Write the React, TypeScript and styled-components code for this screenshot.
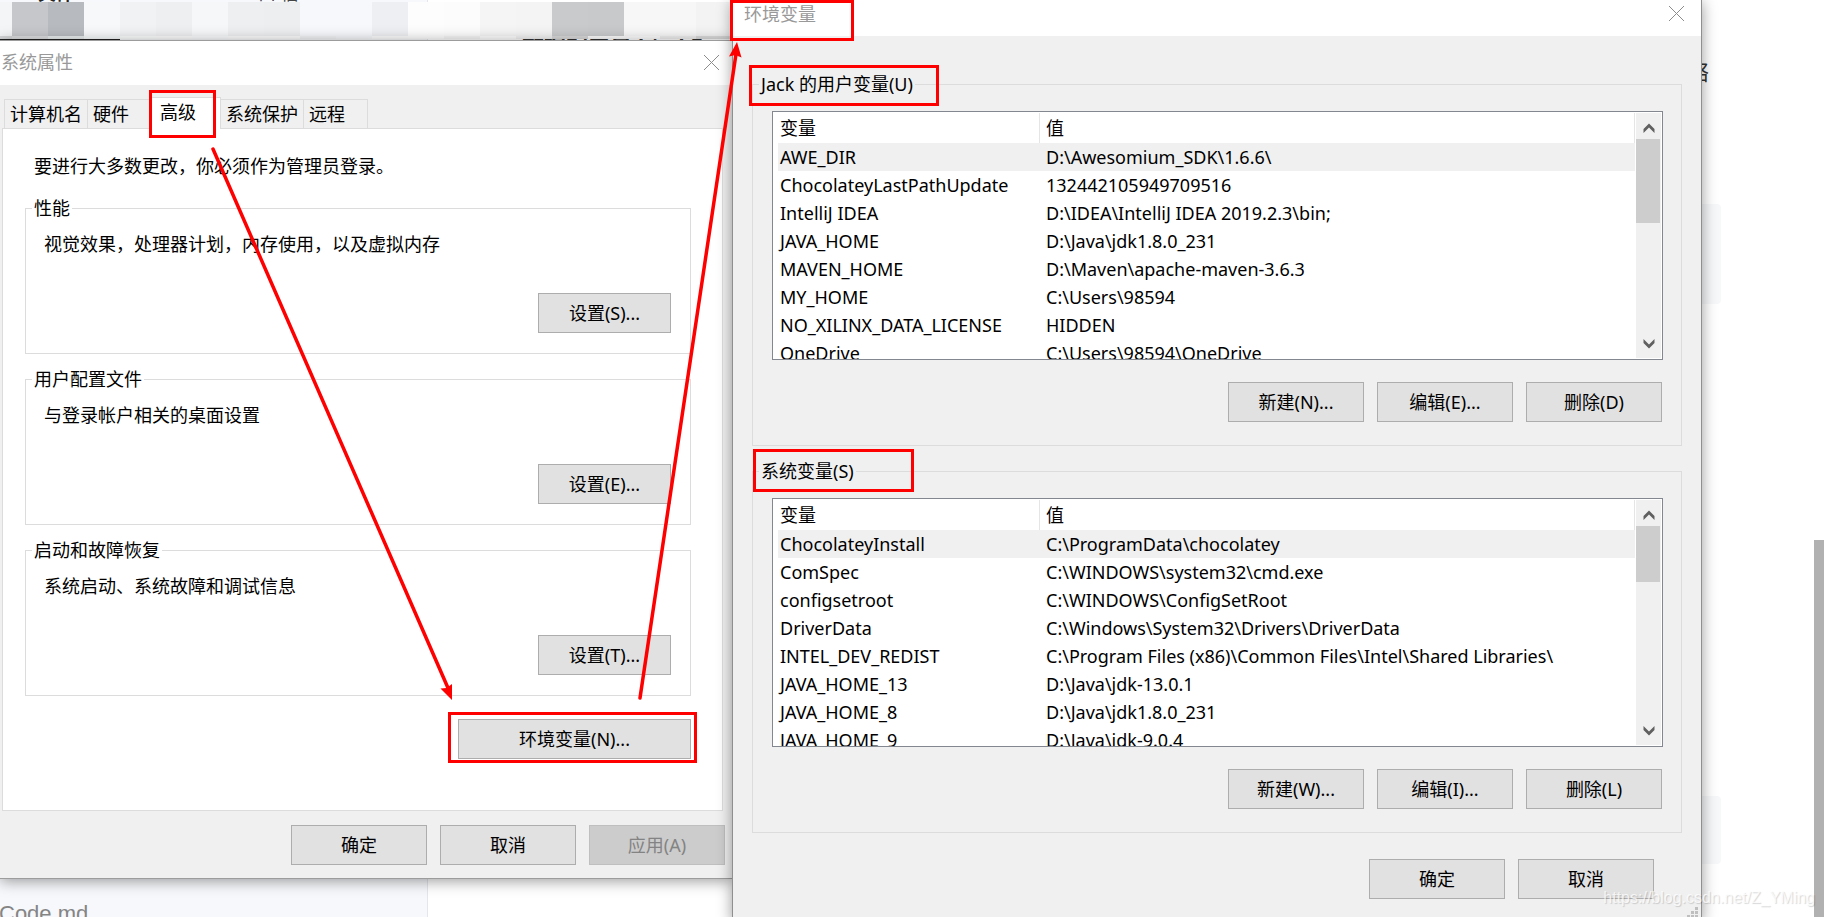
import React from "react";
import styled, { createGlobalStyle, css } from "styled-components";

const GlobalStyle = createGlobalStyle`
  *, *::before, *::after { box-sizing: border-box; }
  body {
    margin: 0;
    background: #fff;
    color: #000;
    font-family: "Noto Sans", "Noto Sans CJK SC", sans-serif;
    font-size: 18px;
    line-height: 24px;
  }
`;

const Desktop = styled.div`
  position: relative;
  height: 100vh;
  overflow: hidden;
  background: #fff;
`;

/* ---------- page behind the dialogs ---------- */

const Sidebar = styled.aside`
  width: 428px;
  height: 100%;
  border-right: 1px solid #e3e6ea;
  background: #f6f8fb;
`;

const Backdrop = styled.span<{ $x: number; $y: number; $size: number; $color: string; $bold?: boolean }>`
  position: absolute;
  left: ${(p) => p.$x}px;
  top: ${(p) => p.$y}px;
  font-family: "Liberation Sans", "Noto Sans CJK SC", sans-serif;
  font-size: ${(p) => p.$size}px;
  font-weight: ${(p) => (p.$bold ? 700 : 400)};
  color: ${(p) => p.$color};
  white-space: nowrap;
`;

const Mosaic = styled.div`
  position: absolute;
  top: 2px;
  left: -24px;
  display: flex;
`;

const MosaicCell = styled.div<{ $color: string; $foot: string }>`
  width: 36px;
  height: 37px;
  background: ${(p) => p.$color};
  border-bottom: 3px solid ${(p) => p.$foot};
`;

const TabUnderline = styled.div`
  position: absolute;
  top: 39px;
  left: 0;
  width: 120px;
  height: 1px;
  background: #222;
`;

const CodeBlock = styled.div<{ $top: number; $height: number }>`
  position: absolute;
  top: ${(p) => p.$top}px;
  right: 103px;
  width: 60px;
  height: ${(p) => p.$height}px;
  border-radius: 4px;
  background: #f7f8fa;
`;

const PageThumb = styled.div`
  position: absolute;
  top: 540px;
  right: 0;
  bottom: 0;
  width: 10px;
  background: #b1b1b1;
`;

/* ---------- dialogs ---------- */

const Dialog = styled.section`
  position: absolute;
  display: flex;
  flex-direction: column;
  background: #f0f0f0;
  box-shadow: 0 2px 14px rgba(0, 0, 0, 0.4);
`;

const PropertiesDialog = styled(Dialog)`
  top: 40px;
  left: 0;
  width: 733px;
  border: solid #9c9c9c;
  border-width: 1px 0;
`;

const EnvironmentDialog = styled(Dialog)`
  top: 0;
  left: 732px;
  right: 122px;
  border: solid #8f8f8f;
  border-width: 0 1px 1px;
`;

const TitleBar = styled.header<{ $tall?: boolean }>`
  display: flex;
  align-items: center;
  justify-content: space-between;
  background: #fff;
  color: #999;
  ${(p) =>
    p.$tall
      ? css`
          height: 44px;
          padding: 0 13px 2px 1px;
        `
      : css`
          height: 36px;
          padding: 0 16px 9px 11px;
        `}
`;

const Title = styled.h2`
  margin: 0;
  font-size: 18px;
  font-weight: 400;
`;

const CloseButton = styled.button`
  display: flex;
  padding: 0;
  border: 0;
  background: none;
  color: #8c8c8c;
`;

const TabList = styled.div`
  display: flex;
  align-items: flex-end;
  height: 43px;
  padding-left: 4px;
`;

const Tab = styled.button<{ $width: number; $active?: boolean }>`
  width: ${(p) => p.$width}px;
  height: 29px;
  padding: 0 0 0 5px;
  border: solid #dcdcdc;
  border-width: 1px 1px 0 0;
  background: #f0f0f0;
  color: #000;
  font: inherit;
  text-align: left;
  white-space: nowrap;

  &:first-child {
    border-left-width: 1px;
  }

  ${(p) =>
    p.$active &&
    css`
      position: relative;
      height: 32px;
      margin-bottom: -1px;
      padding: 0 0 4px 10px;
      background: #fff;
    `}
`;

const TabPanel = styled.div`
  display: flex;
  flex-direction: column;
  margin: 0 10px 0 2px;
  padding: 25px 31px 51px 22px;
  border: 1px solid #dcdcdc;
  background: #fff;
`;

const Notice = styled.p`
  margin: 0 0 18px;
  padding-left: 9px;
`;

const Stack = styled.div<{ $gap: number }>`
  display: flex;
  flex-direction: column;
  gap: ${(p) => p.$gap}px;
`;

const Group = styled.fieldset`
  min-width: 0;
  margin: 0;
  padding: 0;
  border: 1px solid #dcdcdc;
`;

const Legend = styled.legend`
  margin-left: 6px;
  padding: 0 2px;
  line-height: 25px;
`;

const SettingBody = styled.div`
  display: flex;
  flex-direction: column;
  gap: 37px;
  padding: 11px 19px 20px 18px;
`;

const Description = styled.p`
  margin: 0;
`;

const VariableBody = styled.div`
  display: flex;
  flex-direction: column;
  gap: 22px;
  padding: 14px 18px 23px 19px;
`;

const Button = styled.button<{ $width?: number }>`
  width: ${(p) => p.$width ?? 136}px;
  height: 40px;
  padding: 0;
  border: 1px solid #adadad;
  background: #e1e1e1;
  color: #000;
  font: inherit;

  &:disabled {
    border-color: #bfbfbf;
    background: #ccc;
    color: #838383;
  }
`;

const ButtonRow = styled.div`
  display: flex;
  justify-content: flex-end;
  gap: 12px;
`;

const EnvironmentLink = styled(ButtonRow)`
  margin-top: 23px;
`;

const PropertiesFooter = styled(ButtonRow)`
  gap: 13px;
  padding: 14px 8px 13px;
`;

const VariableActions = styled(ButtonRow)`
  gap: 13px;
  padding-right: 1px;
`;

const EnvironmentContent = styled.div`
  padding: 36px 19px 21px;
`;

const EnvironmentFooter = styled(ButtonRow)`
  gap: 13px;
  padding: 26px 28px 0;
`;

const ListBox = styled.div`
  display: flex;
  height: 249px;
  padding: 1px 1px 1px 5px;
  border: 1px solid #828790;
  background: #fff;
  overflow: hidden;
`;

const Table = styled.table`
  flex: 1;
  align-self: flex-start;
  table-layout: fixed;
  border-collapse: separate;
  border-spacing: 0;
`;

const HeadCell = styled.th<{ $width?: number }>`
  width: ${(p) => (p.$width ? `${p.$width}px` : "auto")};
  height: 30px;
  padding: 0 0 0 ${(p) => (p.$width ? 2 : 6)}px;
  border-right: 1px solid #e5e5e5;
  font-weight: 400;
  text-align: left;
`;

const Row = styled.tr<{ $selected?: boolean }>`
  background: ${(p) => (p.$selected ? "#f0f0f0" : "#fff")};
`;

const Cell = styled.td`
  height: 28px;
  padding: 0 0 0 2px;
  white-space: nowrap;

  & + & {
    padding-left: 6px;
  }
`;

const ScrollBar = styled.div`
  display: flex;
  flex-direction: column;
  width: 25px;
  margin-left: 1px;
  background: #f0f0f0;
`;

const ScrollButton = styled.button`
  display: flex;
  align-items: center;
  justify-content: center;
  height: 26px;
  padding: 4px 0 0;
  border: 0;
  background: #f0f0f0;
  color: #606060;

  &:last-child {
    margin-top: auto;
    padding: 0 0 2px;
  }
`;

const ScrollThumb = styled.div<{ $height: number }>`
  width: 24px;
  height: ${(p) => p.$height}px;
  background: #cdcdcd;
`;

const ResizeGrip = styled.svg`
  position: absolute;
  right: 3px;
  bottom: 2px;
`;

/* ---------- annotations drawn over the windows ---------- */

const Highlight = styled.div<{ $x: number; $y: number; $w: number; $h: number }>`
  position: absolute;
  left: ${(p) => p.$x}px;
  top: ${(p) => p.$y}px;
  width: ${(p) => p.$w}px;
  height: ${(p) => p.$h}px;
  border: 3px solid #f00;
  pointer-events: none;
`;

const Arrows = styled.svg`
  position: absolute;
  top: 0;
  left: 0;
  pointer-events: none;
`;

const Watermark = styled.span`
  position: absolute;
  right: 9px;
  bottom: 7px;
  color: rgba(255, 255, 255, 0.75);
  font-family: "Liberation Sans", sans-serif;
  font-size: 16px;
  line-height: 24px;
  text-shadow: 1px 1px 1px rgba(0, 0, 0, 0.16);
`;

const mosaicCells: [string, string][] = [
  ["#f4f5f7", "#d6d7d9"],
  ["#c6c7cb", "#dcdee0"],
  ["#b7babf", "#e9eded"],
  ["#f6f8fa", "#f8fbfc"],
  ["#f1f2f4", "#fcfdfd"],
  ["#eeeff1", "#fdfdfe"],
  ["#f5f7f9", "#fbfcfd"],
  ["#eeeff1", "#fdfdfe"],
  ["#edeef0", "#fdfdfe"],
  ["#f6f8fb", "#f3f4f6"],
  ["#f6f8fb", "#f6f8fb"],
  ["#eeeff2", "#fdfdfd"],
  ["#fdfdfd", "#fefefe"],
  ["#fcfcfc", "#f7f7f7"],
  ["#f5f5f5", "#fefefe"],
  ["#f4f4f4", "#f3f3f3"],
  ["#c9cacc", "#dadadb"],
  ["#c8c9cb", "#fdfdfd"],
  ["#f7f7f7", "#fdfdfd"],
  ["#f7f7f7", "#efefef"],
  ["#f3f3f3", "#dcdcdc"],
];

const settingGroups = [
  { title: "性能", text: "视觉效果，处理器计划，内存使用，以及虚拟内存", button: "设置(S)..." },
  { title: "用户配置文件", text: "与登录帐户相关的桌面设置", button: "设置(E)..." },
  { title: "启动和故障恢复", text: "系统启动、系统故障和调试信息", button: "设置(T)..." },
];

const userVariables: [string, string][] = [
  ["AWE_DIR", "D:\\Awesomium_SDK\\1.6.6\\"],
  ["ChocolateyLastPathUpdate", "132442105949709516"],
  ["IntelliJ IDEA", "D:\\IDEA\\IntelliJ IDEA 2019.2.3\\bin;"],
  ["JAVA_HOME", "D:\\Java\\jdk1.8.0_231"],
  ["MAVEN_HOME", "D:\\Maven\\apache-maven-3.6.3"],
  ["MY_HOME", "C:\\Users\\98594"],
  ["NO_XILINX_DATA_LICENSE", "HIDDEN"],
  ["OneDrive", "C:\\Users\\98594\\OneDrive"],
];

const systemVariables: [string, string][] = [
  ["ChocolateyInstall", "C:\\ProgramData\\chocolatey"],
  ["ComSpec", "C:\\WINDOWS\\system32\\cmd.exe"],
  ["configsetroot", "C:\\WINDOWS\\ConfigSetRoot"],
  ["DriverData", "C:\\Windows\\System32\\Drivers\\DriverData"],
  ["INTEL_DEV_REDIST", "C:\\Program Files (x86)\\Common Files\\Intel\\Shared Libraries\\"],
  ["JAVA_HOME_13", "D:\\Java\\jdk-13.0.1"],
  ["JAVA_HOME_8", "D:\\Java\\jdk1.8.0_231"],
  ["JAVA_HOME_9", "D:\\Java\\jdk-9.0.4"],
];

function Close() {
  return (
    <CloseButton type="button" aria-label="关闭">
      <svg width="17" height="17" viewBox="0 0 17 17" fill="none" stroke="currentColor">
        <path d="M1 1 16 16M16 1 1 16" />
      </svg>
    </CloseButton>
  );
}

function Chevron({ down }: { down?: boolean }) {
  return (
    <svg width="12" height="12" viewBox="0 0 12 12" fill="currentColor">
      <path d={down ? "M0.500 1 6 6.500 11.500 1V5L6 10.500 0.500 5Z" : "M0.500 11 6 5.500 11.500 11V7L6 1.500 0.500 7Z"} />
    </svg>
  );
}

interface VariableGroupProps {
  title: string;
  rows: [string, string][];
  thumb: number;
  buttons: string[];
}

function VariableGroup({ title, rows, thumb, buttons }: VariableGroupProps) {
  return (
    <Group>
      <Legend>{title}</Legend>
      <VariableBody>
        <ListBox>
          <Table>
            <thead>
              <tr>
                <HeadCell $width={262}>变量</HeadCell>
                <HeadCell>值</HeadCell>
              </tr>
            </thead>
            <tbody>
              {rows.map(([name, value], index) => (
                <Row key={name} $selected={index === 0}>
                  <Cell>{name}</Cell>
                  <Cell>{value}</Cell>
                </Row>
              ))}
            </tbody>
          </Table>
          <ScrollBar>
            <ScrollButton type="button" aria-label="向上滚动">
              <Chevron />
            </ScrollButton>
            <ScrollThumb $height={thumb} />
            <ScrollButton type="button" aria-label="向下滚动">
              <Chevron down />
            </ScrollButton>
          </ScrollBar>
        </ListBox>
        <VariableActions>
          {buttons.map((label) => (
            <Button key={label} type="button">
              {label}
            </Button>
          ))}
        </VariableActions>
      </VariableBody>
    </Group>
  );
}

export default function App() {
  return (
    <Desktop>
      <GlobalStyle />
      <Sidebar />
      <Backdrop $x={38} $y={-18} $size={18} $color="#222" $bold>
        文件
      </Backdrop>
      <Backdrop $x={258} $y={-18} $size={18} $color="#444">
        口 信
      </Backdrop>
      <Backdrop $x={522} $y={34} $size={22} $color="#333" $bold>
        数据配置是 html 5
      </Backdrop>
      <Mosaic>
        {mosaicCells.map(([color, foot], index) => (
          <MosaicCell key={index} $color={color} $foot={foot} />
        ))}
      </Mosaic>
      <TabUnderline />
      <Backdrop $x={-1} $y={902} $size={22} $color="#858585">
        Code.md
      </Backdrop>
      <Backdrop $x={1687} $y={61} $size={22} $color="#333">
        络
      </Backdrop>
      <CodeBlock $top={204} $height={100} />
      <CodeBlock $top={796} $height={68} />
      <PageThumb />

      <PropertiesDialog aria-label="系统属性">
        <TitleBar $tall>
          <Title>系统属性</Title>
          <Close />
        </TitleBar>
        <TabList role="tablist">
          <Tab type="button" role="tab" $width={84}>计算机名</Tab>
          <Tab type="button" role="tab" $width={62}>硬件</Tab>
          <Tab type="button" role="tab" aria-selected $width={71} $active>高级</Tab>
          <Tab type="button" role="tab" $width={83}>系统保护</Tab>
          <Tab type="button" role="tab" $width={64}>远程</Tab>
        </TabList>
        <TabPanel role="tabpanel">
          <Notice>要进行大多数更改，你必须作为管理员登录。</Notice>
          <Stack $gap={13}>
            {settingGroups.map((group) => (
              <Group key={group.title}>
                <Legend>{group.title}</Legend>
                <SettingBody>
                  <Description>{group.text}</Description>
                  <ButtonRow>
                    <Button type="button" $width={133}>
                      {group.button}
                    </Button>
                  </ButtonRow>
                </SettingBody>
              </Group>
            ))}
          </Stack>
          <EnvironmentLink>
            <Button type="button" $width={233}>
              环境变量(N)...
            </Button>
          </EnvironmentLink>
        </TabPanel>
        <PropertiesFooter>
          <Button type="button">确定</Button>
          <Button type="button">取消</Button>
          <Button type="button" disabled>
            应用(A)
          </Button>
        </PropertiesFooter>
      </PropertiesDialog>

      <EnvironmentDialog aria-label="环境变量">
        <TitleBar>
          <Title>环境变量</Title>
          <Close />
        </TitleBar>
        <EnvironmentContent>
          <Stack $gap={13}>
            <VariableGroup
              title="Jack 的用户变量(U)"
              rows={userVariables}
              thumb={84}
              buttons={["新建(N)...", "编辑(E)...", "删除(D)"]}
            />
            <VariableGroup
              title="系统变量(S)"
              rows={systemVariables}
              thumb={56}
              buttons={["新建(W)...", "编辑(I)...", "删除(L)"]}
            />
          </Stack>
          <EnvironmentFooter>
            <Button type="button">确定</Button>
            <Button type="button">取消</Button>
          </EnvironmentFooter>
        </EnvironmentContent>
        <ResizeGrip width="11" height="11" viewBox="0 0 11 11" fill="#bfbfbf">
          <path d="M8 0h3v3h-3zM4 4h3v3h-3zM8 4h3v3h-3zM0 8h3v3h-3zM4 8h3v3h-3zM8 8h3v3h-3z" />
        </ResizeGrip>
      </EnvironmentDialog>

      <Highlight $x={149} $y={90} $w={67} $h={48} />
      <Highlight $x={448} $y={712} $w={249} $h={51} />
      <Highlight $x={730} $y={0} $w={124} $h={41} />
      <Highlight $x={749} $y={65} $w={190} $h={41} />
      <Highlight $x={753} $y={449} $w={161} $h={43} />
      <Arrows width="760" height="720" viewBox="0 0 760 720" fill="#f00" stroke="#f00">
        <path d="M213 149 448 688M640 698 736 54" strokeWidth="3.5" strokeLinecap="round" fill="none" />
        <path d="M452 700 440.500 688.500 446.500 688 452 684ZM737 42 741.500 57.500 735.500 55 729 56.500Z" stroke="none" />
      </Arrows>
      <Watermark>https://blog.csdn.net/Z_YMing</Watermark>
    </Desktop>
  );
}
